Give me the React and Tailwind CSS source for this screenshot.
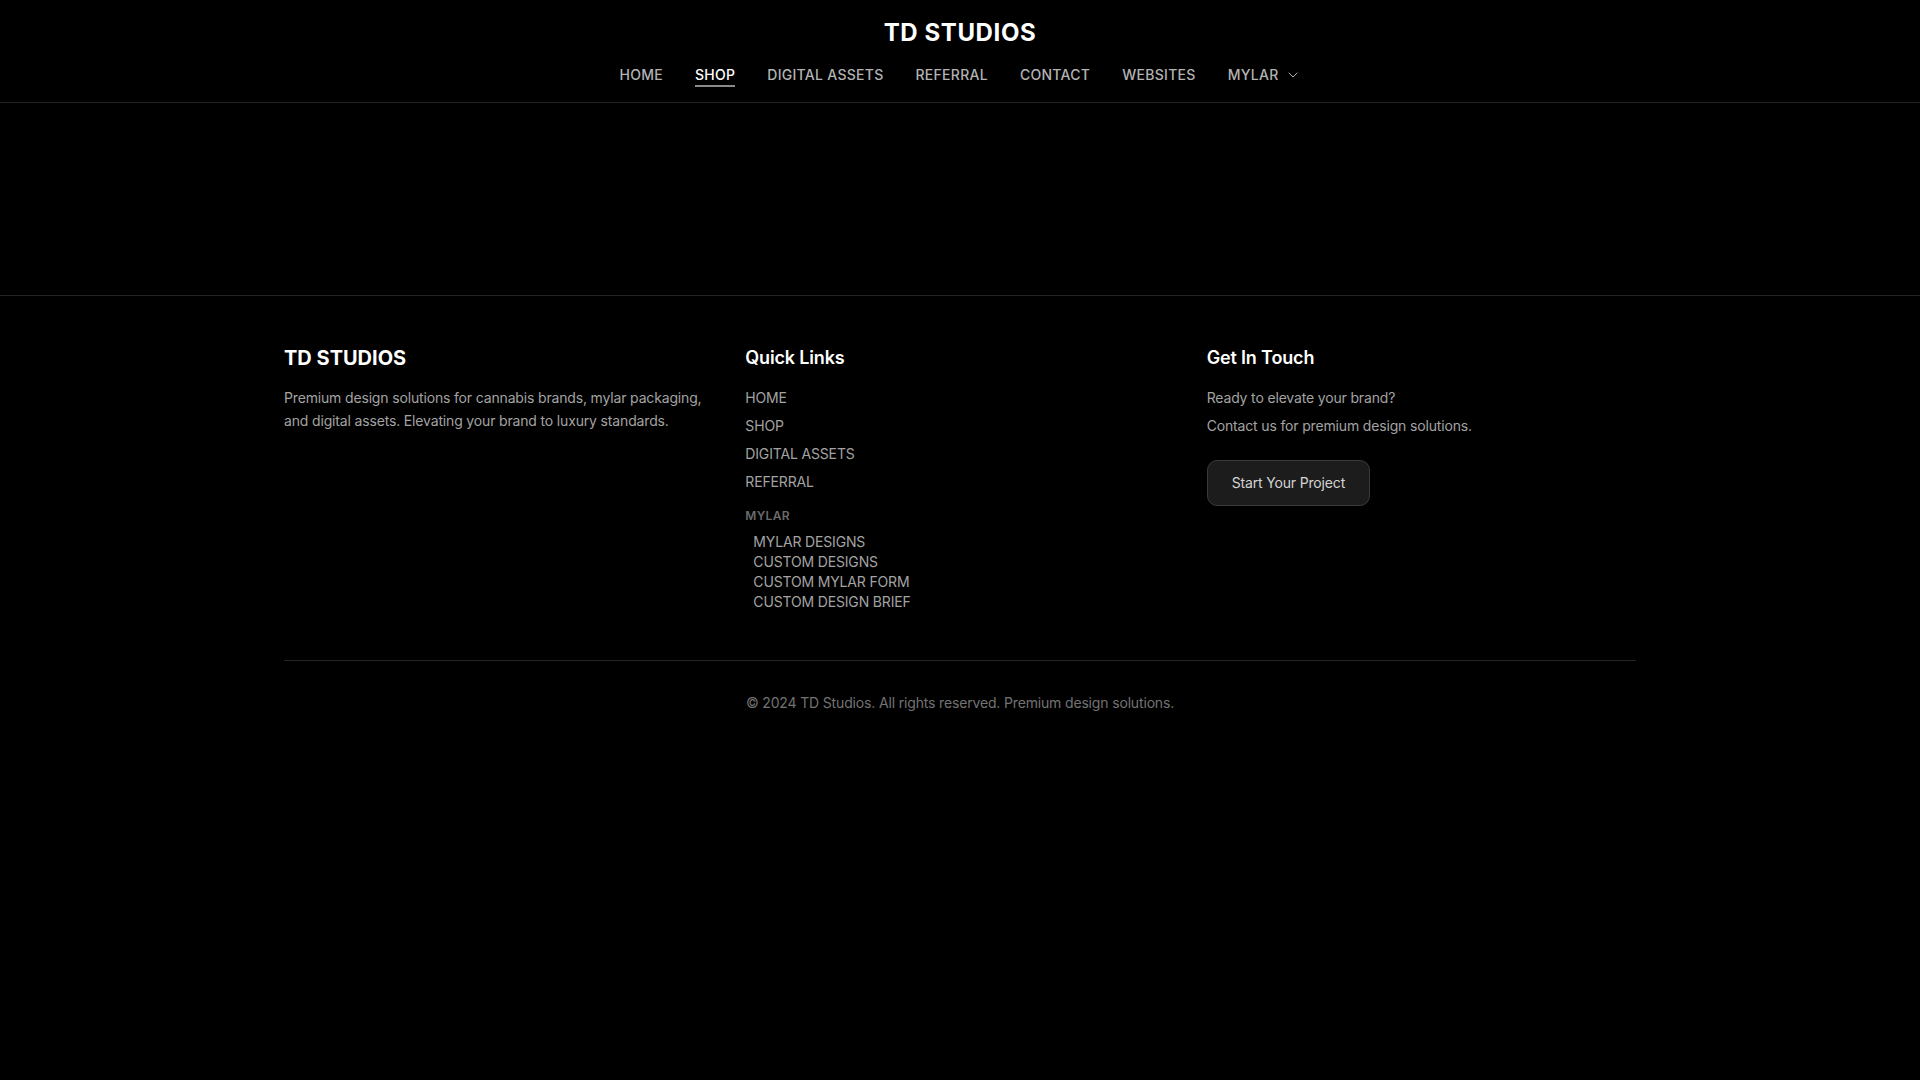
import { ChevronDown } from 'lucide-react';

const navLinks = ['HOME', 'SHOP', 'DIGITAL ASSETS', 'REFERRAL', 'CONTACT', 'WEBSITES'];
const quickLinks = ['HOME', 'SHOP', 'DIGITAL ASSETS', 'REFERRAL'];
const mylarLinks = ['MYLAR DESIGNS', 'CUSTOM DESIGNS', 'CUSTOM MYLAR FORM', 'CUSTOM DESIGN BRIEF'];

export default function App() {
  return (
    <div className="min-h-screen bg-black text-white font-['Inter',sans-serif] antialiased">
      {/* Header */}
      <header className="border-b border-[#232323] pt-[17px] pb-[15px]">
        <h1 className="text-center text-2xl font-bold leading-8 tracking-wide">TD STUDIOS</h1>
        <nav className="mt-4 flex items-center justify-center gap-8">
          {navLinks.map((link) => (
            <a
              key={link}
              href="#"
              className={`text-sm font-medium leading-5 tracking-[0.02em] ${
                link === 'SHOP'
                  ? 'border-b-2 border-[#8a8a8a] text-white'
                  : 'border-b-2 border-transparent text-[#b3b3b3]'
              }`}
            >
              {link}
            </a>
          ))}
          <button
            type="button"
            className="flex items-center gap-1.5 border-b-2 border-transparent text-sm font-medium leading-5 tracking-[0.02em] text-[#b3b3b3]"
          >
            MYLAR
            <ChevronDown size={16} strokeWidth={1.5} />
          </button>
        </nav>
      </header>

      {/* Empty main area */}
      <main className="h-[192px]" />

      {/* Footer */}
      <footer className="border-t border-[#232323]">
        <div className="mx-auto max-w-[1352px] pt-12 pb-16 tracking-[-0.01em]">
          <div className="grid grid-cols-3 gap-8">
            <div>
              <h3 className="mb-[14px] text-xl font-bold leading-7 tracking-normal">TD STUDIOS</h3>
              <p className="text-sm leading-[23px] text-[#a3a3a3]">
                Premium design solutions for cannabis brands, mylar packaging, and digital assets.
                Elevating your brand to luxury standards.
              </p>
            </div>

            <div>
              <h3 className="mb-4 text-lg font-semibold leading-7">Quick Links</h3>
              <ul className="space-y-2">
                {quickLinks.map((link) => (
                  <li key={link} className="text-sm leading-5 text-[#a3a3a3]">
                    <a href="#">{link}</a>
                  </li>
                ))}
              </ul>
              <div className="mt-4">
                <p className="mb-2 text-xs font-semibold leading-4 tracking-wide text-[#6b6b6b]">MYLAR</p>
                <ul className="pl-2">
                  {mylarLinks.map((link) => (
                    <li key={link} className="text-sm leading-5 text-[#a3a3a3]">
                      <a href="#">{link}</a>
                    </li>
                  ))}
                </ul>
              </div>
            </div>

            <div>
              <h3 className="mb-4 text-lg font-semibold leading-7">Get In Touch</h3>
              <div className="space-y-2 text-sm leading-5 text-[#a3a3a3]">
                <p>Ready to elevate your brand?</p>
                <p>Contact us for premium design solutions.</p>
              </div>
              <button
                type="button"
                className="mt-6 rounded-[10px] border border-[#3a3a3a] bg-[#1c1c1c] px-6 py-3 text-sm leading-5 text-[#d4d4d4]"
              >
                Start Your Project
              </button>
            </div>
          </div>

          <div className="mt-12 border-t border-[#232323] pt-8 text-center">
            <p className="text-sm leading-5 text-[#737373]">
              © 2024 TD Studios. All rights reserved. Premium design solutions.
            </p>
          </div>
        </div>
      </footer>
    </div>
  );
}
